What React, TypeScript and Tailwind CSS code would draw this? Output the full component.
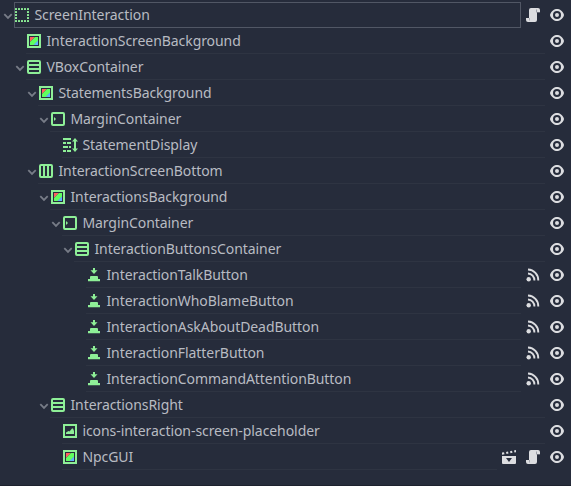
import React from "react";

type IconName = "control" | "color" | "vbox" | "hbox" | "margin" | "label" | "button" | "image";
type Action = "scene" | "script" | "signal";
type Node = {
  name: string;
  depth: number;
  icon: IconName;
  open?: boolean;
  selected?: boolean;
  actions?: Action[];
};

const nodes: Node[] = [
  { name: "ScreenInteraction", depth: 0, icon: "control", open: true, selected: true, actions: ["script"] },
  { name: "InteractionScreenBackground", depth: 1, icon: "color" },
  { name: "VBoxContainer", depth: 1, icon: "vbox", open: true },
  { name: "StatementsBackground", depth: 2, icon: "color", open: true },
  { name: "MarginContainer", depth: 3, icon: "margin", open: true },
  { name: "StatementDisplay", depth: 4, icon: "label" },
  { name: "InteractionScreenBottom", depth: 2, icon: "hbox", open: true },
  { name: "InteractionsBackground", depth: 3, icon: "color", open: true },
  { name: "MarginContainer", depth: 4, icon: "margin", open: true },
  { name: "InteractionButtonsContainer", depth: 5, icon: "vbox", open: true },
  { name: "InteractionTalkButton", depth: 6, icon: "button", actions: ["signal"] },
  { name: "InteractionWhoBlameButton", depth: 6, icon: "button", actions: ["signal"] },
  { name: "InteractionAskAboutDeadButton", depth: 6, icon: "button", actions: ["signal"] },
  { name: "InteractionFlatterButton", depth: 6, icon: "button", actions: ["signal"] },
  { name: "InteractionCommandAttentionButton", depth: 6, icon: "button", actions: ["signal"] },
  { name: "InteractionsRight", depth: 3, icon: "vbox", open: true },
  { name: "icons-interaction-screen-placeholder", depth: 4, icon: "image" },
  { name: "NpcGUI", depth: 4, icon: "color", actions: ["scene", "script"] },
];

const dots = [1, 4, 7, 10, 13];

function NodeIcon({ name }: { name: IconName }) {
  return (
    <svg viewBox="0 0 16 16" className="size-4 shrink-0 fill-[#8eef97]">
      {name === "control" &&
        dots.flatMap((y) =>
          dots
            .filter((x) => y === 1 || y === 13 || x === 1 || x === 13)
            .map((x) => <rect key={`${x}-${y}`} x={x} y={y} width="2" height="2" rx=".5" />),
        )}
      {name === "color" && (
        <>
          <path fillRule="evenodd" d="M1 1h14v14H1zM3 3v10h10V3z" />
          <path fill="#ff5f5f" d="M4 4h5L4 9z" />
          <path fill="#5fff5f" d="M9 4h3v4l-4 4H4V9z" />
          <path fill="#5fb2ff" d="M12 7.500v4.500H7.500z" />
        </>
      )}
      {name === "vbox" && (
        <path
          fillRule="evenodd"
          d="M3 1a2 2 0 0 0-2 2v10a2 2 0 0 0 2 2h10a2 2 0 0 0 2-2V3a2 2 0 0 0-2-2zM3 3h10v2H3zM3 7h10v2H3zM3 11h10v2H3z"
        />
      )}
      {name === "hbox" && (
        <path
          fillRule="evenodd"
          d="M3 1a2 2 0 0 0-2 2v10a2 2 0 0 0 2 2h10a2 2 0 0 0 2-2V3a2 2 0 0 0-2-2zM3 3h2v10H3zM7 3h2v10H7zM11 3h2v10h-2z"
        />
      )}
      {name === "margin" && (
        <path
          fillRule="evenodd"
          d="M3 1a2 2 0 0 0-2 2v10a2 2 0 0 0 2 2h10a2 2 0 0 0 2-2V3a2 2 0 0 0-2-2zM3 3h10v10H3zM4 6v4l2-2z"
        />
      )}
      {name === "label" && (
        <path d="M1 1h8v2H1zM1 5h3v2H1zM5 5h4v2H5zM1 9h5v2H1zM7 9h2v2H7zM1 13h3v2H1zM5 13h4v2H5zM13 1l3 3.500h-2v7h2L13 15l-3-3.500h2v-7h-2z" />
      )}
      {name === "button" && (
        <path d="M7 1h2v2.300h2.500L8 7 4.500 3.300H7zM5 9h6a1 1 0 0 1 1 1v2h2v2.300H2V12h2v-2a1 1 0 0 1 1-1z" />
      )}
      {name === "image" && (
        <path fillRule="evenodd" d="M1 1h14v14H1zM3 3v10h10V3zM4 11V9.500l2.500-1.500 1 .5L10 5.500h1L12 8v3z" />
      )}
    </svg>
  );
}

function ActionIcon({ name }: { name: Action | "eye" }) {
  return (
    <button className="flex w-6 shrink-0 items-center justify-center pt-[0.8px]" aria-label={name}>
      <svg viewBox="0 0 16 16" className="size-4 fill-[#dcdde0]">
        {name === "eye" && (
          <path
            fillRule="evenodd"
            d="M8 2C5.443 2 2.209 3.948 1.045 7.705a1 1 0 0 0-.01.57C2.163 12.230 5.482 14 8 14s5.837-1.770 6.965-5.725a1 1 0 0 0 0-.55C13.860 3.880 10.557 2 8 2zM8 4a4 4 0 0 1 0 8 4 4 0 0 1 0-8zM8 6a2 2 0 0 0 0 4 2 2 0 0 0 0-4z"
          />
        )}
        {name === "script" && (
          <>
            <path d="M6 1a2 2 0 0 0-2 2v8H1v2a2 2 0 0 0 2 2h7a2 2 0 0 0 2-2V5h3V3a2 2 0 0 0-2-2z" />
            <path fill="#9b9ea7" d="M11 2.500h1V5h3v.6h-4zM4 11h.8v2.500H4z" />
          </>
        )}
        {name === "signal" && (
          <>
            <circle cx="3.700" cy="12.200" r="2.200" />
            <path
              fill="none"
              stroke="#dcdde0"
              strokeWidth="1.900"
              d="M3 2.500A10.700 10.700 0 0 1 13.300 13.500M3 6.500A6.800 6.800 0 0 1 9.400 13.500"
            />
          </>
        )}
        {name === "scene" && (
          <>
            <path fillRule="evenodd" d="M1 7h14v7a1 1 0 0 1-1 1H2a1 1 0 0 1-1-1zM5 9l3 4 3-4z" />
            <path d="M1 3.600l2-.4.500 2-2.500.5zM5 2.900l2-.4.500 2-2 .4zM9 2.200l2-.4.500 2-2 .4zM13 1.500l2-.4v2.200l-1.500.3z" />
          </>
        )}
      </svg>
    </button>
  );
}

function TreeRow({ node }: { node: Node }) {
  return (
    <div className="flex h-[26px] pr-[2.5px]">
      <div className="flex shrink-0 items-center justify-end pt-px" style={{ width: 14.4 + node.depth * 12 }}>
        {node.open && (
          <svg viewBox="0 0 12 12" className="size-3 shrink-0 fill-none stroke-[#777c87] stroke-[1.8]">
            <path d="M2.300 4.200L6 7.900l3.700-3.700" />
          </svg>
        )}
      </div>
      <div
        className={
          node.selected
            ? "flex min-w-0 flex-1 items-center border border-[#515765] pt-[0.8px]"
            : "flex min-w-0 flex-1 items-center border-b border-[#2e3442] pt-[1.8px]"
        }
      >
        <div className={node.selected ? "-ml-px flex items-center" : "flex items-center"}>
          <NodeIcon name={node.icon} />
          <span className="ml-1 pb-[1.4px] text-sm leading-5 tracking-[-0.07px] whitespace-nowrap text-[#b8bbc2]">
            {node.name}
          </span>
        </div>
      </div>
      {node.actions?.map((action) => <ActionIcon key={action} name={action} />)}
      <ActionIcon name="eye" />
    </div>
  );
}

export default function App() {
  return (
    <main className="h-[486px] w-[571px] overflow-hidden border-b border-[#1d222e] bg-[#262c3b] pt-[2px] font-['Noto_Sans',sans-serif]">
      {nodes.map((node, index) => (
        <TreeRow key={index} node={node} />
      ))}
    </main>
  );
}
